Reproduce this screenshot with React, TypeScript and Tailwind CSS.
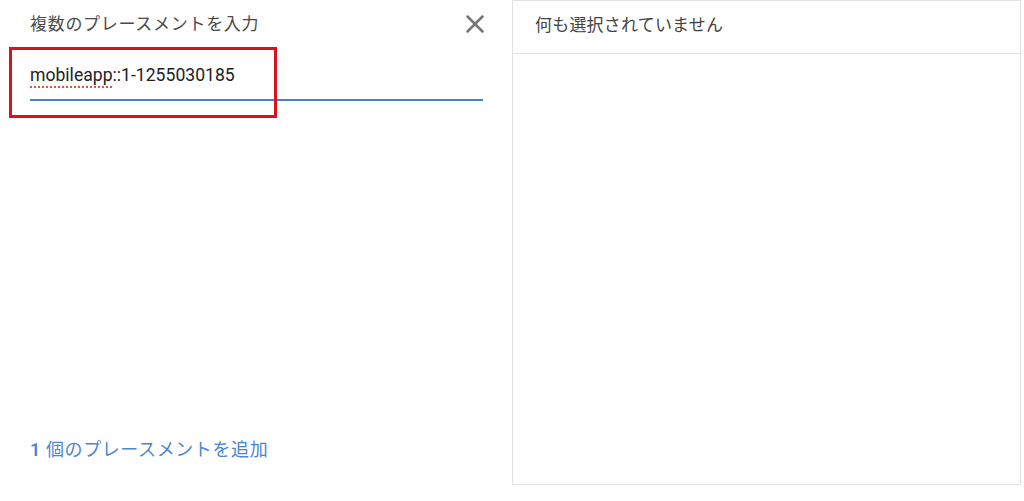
import * as React from 'react'
import { X } from 'lucide-react'

const font = "font-['Roboto','Noto_Sans_CJK_JP',sans-serif]"

function PlacementInput() {
  const [value] = React.useState('1-1255030185')
  return (
    <div className="relative flex h-[501px] w-[512px] shrink-0 flex-col pl-[30px] pr-[29px]">
      <div className="flex h-[46px] items-center justify-between">
        <span className="mt-[4px] text-[17px] tracking-[0.7px] text-[#4a4a4a]">複数のプレースメントを入力</span>
        <X size={30} strokeWidth={2} className="-mr-[7px] mt-[2px] text-[#757575]" aria-hidden="true" />
      </div>

      <div className="border-b-2 border-[#4a7fd3] pb-[12px] pt-[17px]">
        <p className="text-[17.6px] leading-6 text-[#222]">
          <span className="underline decoration-[#e05050] decoration-dotted decoration-2 underline-offset-[5px]">mobileapp</span>
          ::{value}
        </p>
      </div>

      <div className="mt-auto pb-[38px]">
        <button type="button" className="text-[18px] tracking-[0.6px] text-[#4a86d4]">
          <span className="font-semibold">1</span> 個のプレースメントを追加
        </button>
      </div>

      {/* annotation */}
      <div className="pointer-events-none absolute left-[9px] top-[47px] h-[71px] w-[268px] border-[3px] border-[#d8121e]" />
    </div>
  )
}

function SelectedPanel() {
  return (
    <div className="mb-[16px] mr-[3px] flex flex-1 flex-col border border-[#e2e2e2]">
      <div className="flex h-[53px] shrink-0 items-center border-b border-[#e2e2e2] pb-[3px] pl-[22px]">
        <span className="text-[17px] tracking-[0.2px] text-[#444]">何も選択されていません</span>
      </div>
      <div className="flex-1" />
    </div>
  )
}

export default function App() {
  return (
    <div className={`flex h-[501px] w-[1024px] overflow-hidden bg-white ${font}`}>
      <PlacementInput />
      <SelectedPanel />
    </div>
  )
}
